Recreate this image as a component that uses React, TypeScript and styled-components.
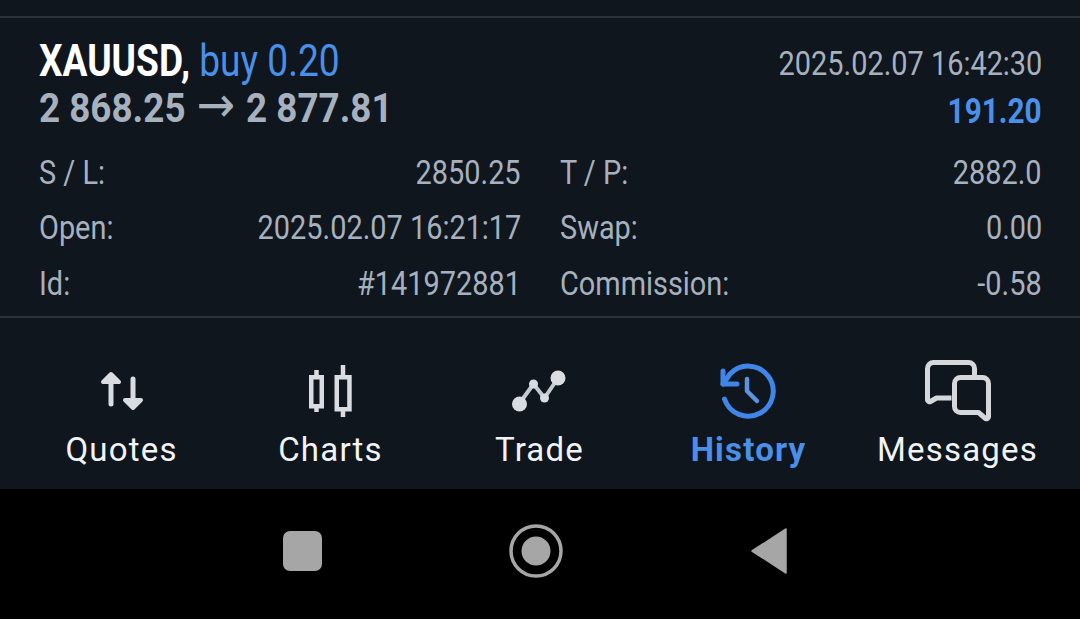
import React from "react";
import styled, { createGlobalStyle } from "styled-components";

const Global = createGlobalStyle`
  html, body { margin: 0; padding: 0; background: #000; }
  #root { width: 1080px; height: 619px; overflow: hidden; }
`;

const Page = styled.div`
  width: 1080px; height: 619px; display: flex; flex-direction: column;
  background: #10161e; font-family: Roboto, "Liberation Sans", sans-serif;
`;
const TopGap = styled.div`height: 16px; border-bottom: 2px solid #2c3238;`;
const Deal = styled.section`
  height: 300px; box-sizing: border-box; padding: 20px 38px 0 39px;
  border-bottom: 2px solid #2c3238;
  display: flex; flex-direction: column;
`;
const Head = styled.div`display: flex; justify-content: space-between; flex: none; height: 106px;`;
const Col = styled.div<{ $right?: boolean }>`
  display: flex; flex-direction: column; align-items: ${p => p.$right ? "flex-end" : "flex-start"};
`;
const Squeeze = styled.span<{ $size: number; $scale: number; $right?: boolean; $weight?: number; $color?: string; $lh: number }>`
  display: inline-block; white-space: nowrap;
  font-size: ${p => p.$size}px; line-height: ${p => p.$lh}px; font-weight: ${p => p.$weight ?? 400};
  color: ${p => p.$color ?? "#a7b1be"};
  transform: scaleX(${p => p.$scale}); transform-origin: ${p => p.$right ? "right" : "left"} center;
`;
const Blue = styled.span`color: #4a8fe8; font-weight: 400;`;
const White = styled.span`color: #fff;`;
const Arrow = styled.span`font-family: "DejaVu Sans", sans-serif; font-weight: 400; font-size: 50px; line-height: 40px; margin: 0 2px;`;
const Grid = styled.div`
  display: grid; grid-template-columns: 482px 482px; column-gap: 39px; grid-auto-rows: 55.5px; flex: none;
`;
const Row = styled.div`display: flex; justify-content: space-between; align-items: center;`;

const Tabs = styled.nav`height: 171px; flex: none; display: grid; grid-template-columns: repeat(5, 209px); padding-left: 17px;`;
const Tab = styled.div`
  display: flex; flex-direction: column; align-items: center; justify-content: flex-start;
  padding-top: 33px;
`;
const IconBox = styled.div`height: 79px; display: flex; align-items: center; justify-content: center;`;
const TabLabel = styled.span<{ $active?: boolean }>`
  font-size: 33px; line-height: 40px; letter-spacing: 1.2px; font-weight: ${p => p.$active ? 700 : 400};
  color: ${p => p.$active ? "#4a8fe8" : "#f1f3f5"};
`;
const NavBar = styled.div`
  flex: 1; background: #000; display: grid; grid-template-columns: repeat(3, 233px);
  justify-content: center; align-items: center; justify-items: center;
  padding: 0 8px 6px 0;
`;

const Quotes = () => (
  <svg width="46" height="42" viewBox="0 0 46 42" fill="none" stroke="#d9dde2" strokeWidth="5" strokeLinecap="round" strokeLinejoin="round">
    <path d="M12 34V6" />
    <path d="M4 12l8-8 8 8z" fill="#d9dde2" strokeWidth="4" />
    <path d="M34 9v26" />
    <path d="M26 30l8 8 8-8z" fill="#d9dde2" strokeWidth="4" />
  </svg>
);
const Charts = () => (
  <svg width="45" height="54" viewBox="0 0 45 54" fill="none" stroke="#d9dde2" strokeWidth="4.5">
    <path d="M8.5 6v7M8.500 43v5M35 1v12M35 46v7" />
    <rect x="3.25" y="13.25" width="10.5" height="29" />
    <rect x="28.75" y="13.25" width="12.7" height="32" />
  </svg>
);
const Trade = () => (
  <svg width="56" height="46" viewBox="0 0 56 46" fill="#d9dde2">
    <path d="M7 36L21.5 16L32.5 30L46 10" fill="none" stroke="#c4c9cf" strokeWidth="4" strokeLinejoin="round" />
    <circle cx="7.5" cy="36" r="7.5" />
    <circle cx="21.5" cy="16" r="4.5" />
    <circle cx="32.5" cy="30" r="4.5" />
    <circle cx="46" cy="10" r="7.5" />
  </svg>
);
const History = () => (
  <svg width="58" height="58" viewBox="0 0 58 58" fill="none" stroke="#3f86e8" strokeWidth="5" strokeLinecap="round" strokeLinejoin="round">
    <path d="M4.5 37A25 25 0 1 0 10 12L3 22" />
    <path d="M3 9v13h14" />
    <path d="M27 17v12l10 10" stroke="#5b93e0" strokeWidth="4.5" />
  </svg>
);
const Messages = () => (
  <svg width="68" height="63" viewBox="0 0 68 63" fill="none" stroke="#d5d7da" strokeWidth="5" strokeLinejoin="round">
    <path d="M50.5 16V9.5a6 6 0 0 0-6-6H9.5a6 6 0 0 0-6 6V41a2 2 0 0 0 3 1.5l6-3.5h15" />
    <path d="M36.5 18.5H58.5a6 6 0 0 1 6 6V58a2 2 0 0 1-3 1.5l-7-6H36.5a6 6 0 0 1-6-6V24.5a6 6 0 0 1 6-6z" />
  </svg>
);
const Square = () => (
  <svg width="40" height="40" viewBox="0 0 40 40"><rect x="0" y="0" width="39" height="40" rx="7" fill="#a6a6a6" /></svg>
);
const Home = () => (
  <svg width="54" height="54" viewBox="0 0 54 54" fill="none">
    <circle cx="27" cy="27" r="25" stroke="#a6a6a6" strokeWidth="3.5" />
    <circle cx="27" cy="27" r="14.5" fill="#a6a6a6" />
  </svg>
);
const Back = () => (
  <svg width="36" height="46" viewBox="0 0 36 46"><path d="M35 1v44L1 23z" fill="#a6a6a6" stroke="#a6a6a6" strokeLinejoin="round" strokeWidth="1.5" /></svg>
);

const rows = [
  ["S / L:", "2850.25", "T / P:", "2882.0"],
  ["Open:", "2025.02.07 16:21:17", "Swap:", "0.00"],
  ["Id:", "#141972881", "Commission:", "-0.58"],
];

const Cell = ({ label, value }: { label: string; value: string }) => (
  <Row>
    <Squeeze $size={34} $scale={0.85} $lh={40}>{label}</Squeeze>
    <Squeeze $size={34} $scale={0.85} $lh={40} $right>{value}</Squeeze>
  </Row>
);

export default function App() {
  return (
    <Page>
      <Global />
      <TopGap />
      <Deal>
        <Head>
          <Col>
            <Squeeze $size={44} $scale={0.843} $lh={46} $weight={700} $color="#fff">
              <White>XAUUSD,</White> <Blue>buy 0.20</Blue>
            </Squeeze>
            <Squeeze $size={40} $scale={0.92} $lh={50} $weight={700}>2 868.25 <Arrow>→</Arrow> 2 877.81</Squeeze>
          </Col>
          <Col $right>
            <Squeeze $size={34} $scale={0.85} $lh={50} $right>2025.02.07 16:42:30</Squeeze>
            <Squeeze $size={35} $scale={0.85} $lh={48} $right $weight={700} $color="#4a8fe8">191.20</Squeeze>
          </Col>
        </Head>
        <Grid>
          {rows.map(r => (
            <React.Fragment key={r[0]}>
              <Cell label={r[0]} value={r[1]} />
              <Cell label={r[2]} value={r[3]} />
            </React.Fragment>
          ))}
        </Grid>
      </Deal>
      <Tabs>
        <Tab><IconBox><Quotes /></IconBox><TabLabel>Quotes</TabLabel></Tab>
        <Tab><IconBox><Charts /></IconBox><TabLabel>Charts</TabLabel></Tab>
        <Tab><IconBox><Trade /></IconBox><TabLabel>Trade</TabLabel></Tab>
        <Tab><IconBox><History /></IconBox><TabLabel $active>History</TabLabel></Tab>
        <Tab><IconBox><Messages /></IconBox><TabLabel>Messages</TabLabel></Tab>
      </Tabs>
      <NavBar>
        <Square />
        <Home />
        <Back />
      </NavBar>
    </Page>
  );
}
